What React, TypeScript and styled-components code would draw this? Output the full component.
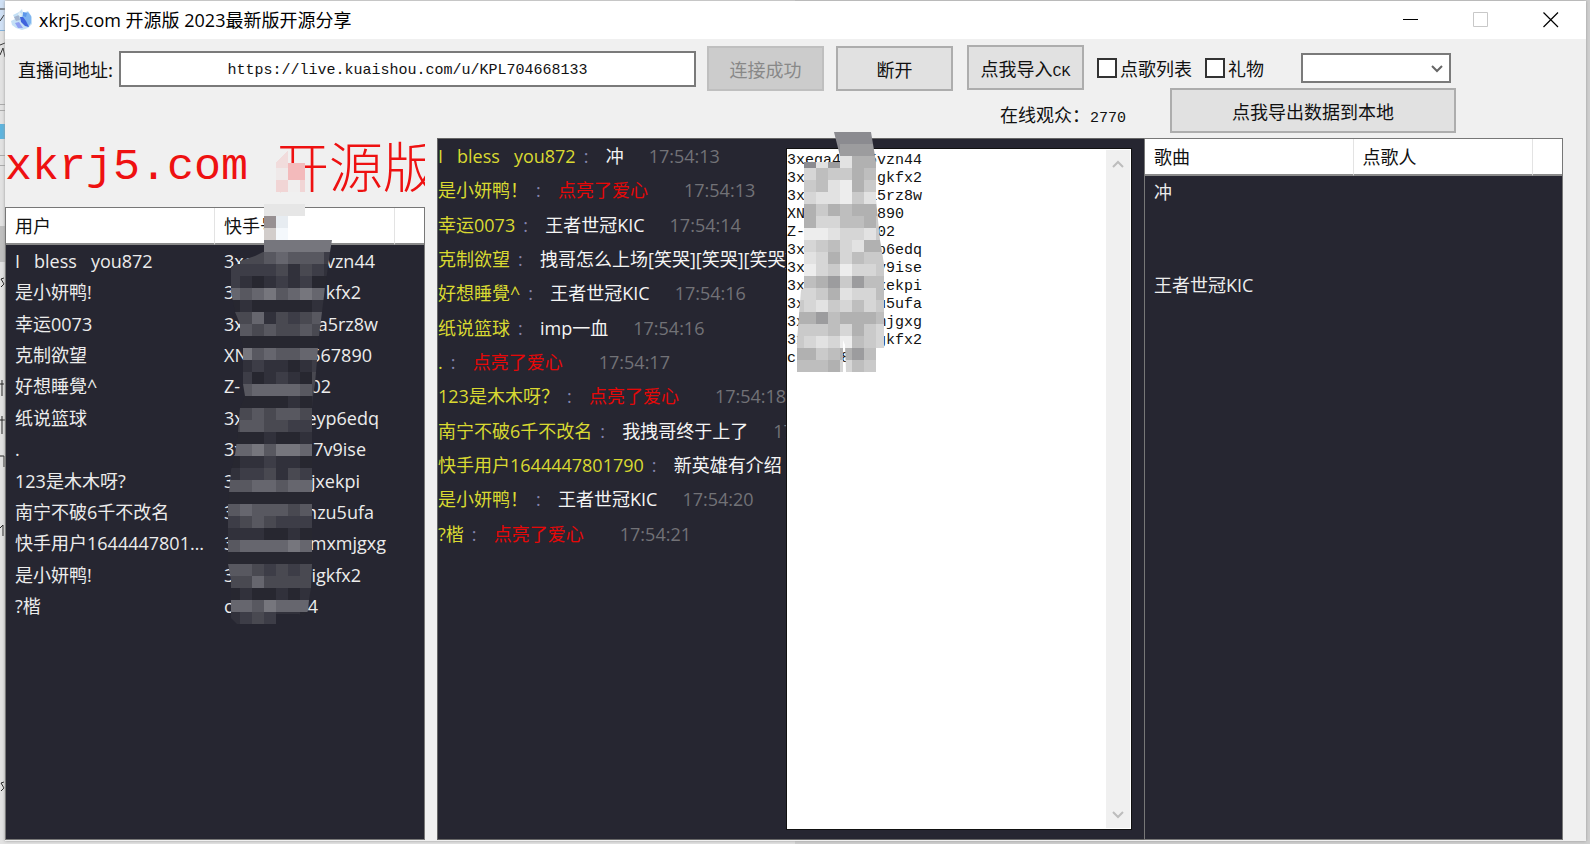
import React from "react";
import styled, { createGlobalStyle } from "styled-components";

const UI_FONT = '"Open Sans", "Noto Sans CJK SC", sans-serif';
const CJK_FONT = '"Noto Sans CJK SC", sans-serif';
const MONO_FONT = '"Liberation Mono", "Noto Sans CJK SC", monospace';

const GlobalStyle = createGlobalStyle`
  *, *::before, *::after { box-sizing: border-box; }
  body { margin: 0; background: #d2d2d2; font-family: ${UI_FONT}; font-size: 18px; color: #111; }
  button, input, select, textarea { font: inherit; color: inherit; margin: 0; border-radius: 0; }
`;

const Desktop = styled.div`
  position: relative;
  display: flex;
  min-height: 100vh;
  padding: 1px 4px 3px 5px;
  background: linear-gradient(to right, #e2e2e2 50%, #cfcfcf 50%);
`;

const DesktopEdge = styled.svg`
  position: absolute;
  left: 0;
  top: 0;
`;

const Window = styled.main`
  flex: 1;
  min-width: 0;
  display: flex;
  flex-direction: column;
  background: #f0f0f0;
  box-shadow: 0 0 3px #999;
  position: relative;
`;

const TitleBar = styled.header`
  display: flex;
  align-items: center;
  height: 38px;
  padding-left: 6px;
  background: #fff;
`;

const Title = styled.h1`
  flex: 1;
  margin: 0 0 0 6px;
  font-size: 18px;
  font-weight: 400;
  line-height: 24px;
  white-space: nowrap;
  color: #000;
`;

const CaptionButton = styled.button`
  display: grid;
  place-items: center;
  width: 70px;
  height: 38px;
  padding: 0;
  border: 0;
  background: none;
`;

const CaptionButtons = styled.div`
  display: flex;
`;

const Toolbar = styled.div`
  display: flex;
  align-items: flex-start;
  height: 49px;
  padding: 6px 135px 0 13px;
  font-family: ${CJK_FONT};
  white-space: nowrap;
`;

const AddressGroup = styled.div`
  flex: 1;
  display: flex;
  align-items: center;
  padding-top: 1px;
`;

const AddressLabel = styled.label`
  flex: none;
  width: 101px;
`;

const AddressInput = styled.input`
  flex: 1;
  min-width: 0;
  height: 36px;
  margin-right: 11px;
  padding: 3px 0 0;
  border: 2px solid #7a7a7a;
  background: #fff;
  font-family: ${MONO_FONT};
  font-size: 15px;
  text-align: center;
`;

const PushButton = styled.button<{ $wide?: boolean }>`
  flex: none;
  width: ${(p) => (p.$wide ? 286 : 117)}px;
  height: 45px;
  padding: 1px 0 0;
  border: 2px solid #adadad;
  background: #e1e1e1;
  line-height: 24px;

  &:disabled {
    border-color: #bfbfbf;
    background: #cccccc;
    color: #888;
  }
`;

const AddressButtons = styled.div`
  display: flex;
  gap: 12px;
`;

const OptionGroup = styled.div`
  display: flex;
  align-items: center;
  gap: 13px;
  margin-left: 14px;
`;

const Narrow = styled.span`
  font-family: ${MONO_FONT};
  font-size: 15px;
  line-height: 15px;
`;

const CheckLabel = styled.label`
  display: flex;
  align-items: center;
  gap: 3px;
`;

const CheckBox = styled.input`
  appearance: none;
  width: 20px;
  height: 20px;
  border: 2px solid #333;
  background: #fff;
`;

const SelectBox = styled.div`
  position: relative;
  width: 150px;
  height: 30px;
  margin-left: 24px;

  svg {
    position: absolute;
    right: 7px;
    top: 11px;
    pointer-events: none;
  }
`;

const Select = styled.select`
  appearance: none;
  display: block;
  width: 100%;
  height: 100%;
  border: 2px solid #7a7a7a;
  background: #fff;
`;

const StatusRow = styled.div`
  display: flex;
  align-items: flex-start;
  justify-content: flex-end;
  gap: 44px;
  height: 50px;
  padding-right: 130px;
  font-family: ${CJK_FONT};
`;

const Audience = styled.output`
  line-height: 52px;
`;

const Panels = styled.div`
  flex: 1;
  display: grid;
  grid-template-columns: 420fr 12px 707fr 419fr;
  padding: 0 23px 1px 0;
`;

const UserColumn = styled.section`
  position: relative;
  display: flex;
  flex-direction: column;
  min-width: 0;
`;

const Banner = styled.h2`
  display: flex;
  align-items: flex-start;
  height: 69px;
  margin: 0;
  overflow: hidden;
  white-space: pre;
  font-family: ${MONO_FONT};
  font-size: 45px;
  font-weight: 400;
  line-height: 60px;
  color: #ee1111;
`;

const BannerHan = styled.span`
  font-family: ${CJK_FONT};
  font-size: 54px;
  font-weight: 300;
  line-height: 54px;
`;

const TableFrame = styled.div`
  flex: 1;
  min-width: 0;
  border: 1px solid #777;
  background: #262631;
`;

const Table = styled.table`
  width: 100%;
  table-layout: fixed;
  border-collapse: separate;
  border-spacing: 0;
  color: #ececec;
`;

const HeadCell = styled.th`
  height: 37px;
  padding: 0 9px;
  border-right: 1px solid #e3e3e3;
  border-bottom: 2px solid #8a8a8a;
  background: #fff;
  color: #111;
  font-weight: 400;
  line-height: 24px;
  text-align: left;

  &:last-child { border-right: 0; }
`;

const Cell = styled.td`
  height: 31px;
  padding: 0 9px;
  line-height: 24px;
  white-space: pre;
  overflow: hidden;
  text-overflow: ellipsis;
`;

const UserTable = styled(Table)`
  height: 414px;
`;

const MaskedId = styled.span<{ $width: number }>`
  display: flex;
  justify-content: space-between;
  width: ${(p) => p.$width}px;
`;

const Mosaic = styled.svg`
  position: absolute;
  left: 0;
  top: 0;
  overflow: visible;
  pointer-events: none;
`;

const ChatColumn = styled.section`
  grid-column: 3;
  display: grid;
  grid-template-columns: 348fr 346fr;
  min-width: 0;
  padding-right: 12px;
  border: 1px solid #666;
  border-right: 0;
  background: #262631;
`;

const ChatList = styled.ul`
  min-width: 0;
  margin: 0;
  padding: 0;
  overflow: hidden;
  list-style: none;
  display: grid;
  grid-auto-rows: 1fr;
  align-content: start;
  height: 412px;
`;

const ChatLine = styled.li`
  display: flex;
  align-items: center;
  white-space: pre;
  line-height: 24px;
`;

const Sender = styled.span`
  color: #d9d931;
`;

const Colon = styled.span`
  width: 30px;
  flex: none;
  padding-left: 8px;
  color: #8484ad;
`;

const Message = styled.span<{ $like?: boolean }>`
  margin-right: ${(p) => (p.$like ? 36 : 25)}px;
  color: ${(p) => (p.$like ? "#e60808" : "#f4f4f4")};
`;

const Time = styled.time`
  color: #727277;
`;

const IdBox = styled.div`
  position: relative;
  display: flex;
  margin: 9px 0;
  border: 1px solid #111;
  background: #fff;
`;

const IdText = styled.textarea`
  flex: 1;
  min-width: 0;
  padding: 3px 0 0;
  border: 0;
  outline: 0;
  resize: none;
  overflow: hidden;
  background: #fff;
  font-family: ${MONO_FONT};
  font-size: 15px;
  line-height: 18px;
  white-space: pre;
`;

const ScrollTrack = styled.div`
  display: flex;
  flex-direction: column;
  justify-content: space-between;
  width: 24px;
  margin: 1px 1px 1px 0;
  background: #f0f0f0;
`;

const ScrollButton = styled.button`
  display: grid;
  place-items: center;
  height: 28px;
  padding: 0;
  border: 0;
  background: none;
`;

type User = { name: string; head: string; tail: string; width: number };

const users: User[] = [
  { name: "I   bless   you872", head: "3xe", tail: "vzn44", width: 151 },
  { name: "是小妍鸭!", head: "3", tail: "kfx2", width: 137 },
  { name: "幸运0073", head: "3x", tail: "a5rz8w", width: 154 },
  { name: "克制欲望", head: "XN", tail: "567890", width: 148 },
  { name: "好想睡覺^", head: "Z-", tail: "02", width: 107 },
  { name: "纸说篮球", head: "3x", tail: "eyp6edq", width: 155 },
  { name: ".", head: "3x", tail: "7v9ise", width: 142 },
  { name: "123是木木呀?", head: "3", tail: "jxekpi", width: 136 },
  { name: "南宁不破6千不改名", head: "3", tail: "nzu5ufa", width: 150 },
  { name: "快手用户1644447801790", head: "3", tail: "mxmjgxg", width: 162 },
  { name: "是小妍鸭!", head: "3", tail: "igkfx2", width: 137 },
  { name: "?楷", head: "c", tail: "4", width: 94 },
];

type Chat = { from: string; text: string; at: string; like?: boolean };

const LIKE = "点亮了爱心";

const chats: Chat[] = [
  { from: "I   bless   you872", text: "冲", at: "17:54:13" },
  { from: "是小妍鸭！", text: LIKE, at: "17:54:13", like: true },
  { from: "幸运0073", text: "王者世冠KIC", at: "17:54:14" },
  { from: "克制欲望", text: "拽哥怎么上场[笑哭][笑哭][笑哭]", at: "17:54:15" },
  { from: "好想睡覺^", text: "王者世冠KIC", at: "17:54:16" },
  { from: "纸说篮球", text: "imp一血", at: "17:54:16" },
  { from: ".", text: LIKE, at: "17:54:17", like: true },
  { from: "123是木木呀？", text: LIKE, at: "17:54:18", like: true },
  { from: "南宁不破6千不改名", text: "我拽哥终于上了", at: "17:54:18" },
  { from: "快手用户1644447801790", text: "新英雄有介绍", at: "17:54:19" },
  { from: "是小妍鸭！", text: "王者世冠KIC", at: "17:54:20" },
  { from: "?楷", text: LIKE, at: "17:54:21", like: true },
];

const ids = [
  "3xega4   5vzn44",
  "3x        gkfx2",
  "3x       a5rz8w",
  "XN       5890",
  "Z-        02",
  "3x       yp6edq",
  "3x       7v9ise",
  "3x       jxekpi",
  "3x       zu5ufa",
  "3x       xmjgxg",
  "3x       igkfx2",
  "cl    8",
].join("\n");

const songs = ["冲", "", "", "王者世冠KIC"];

const DARK: Record<string, string> = {
  a: "#272730", b: "#31313b", c: "#3d3d47", d: "#494951",
  e: "#585860", f: "#66666e", g: "#76767d",
};

const LIGHT: Record<string, string> = {
  a: "#ededed", b: "#e2e2e2", c: "#d6d6d6", d: "#cacaca",
  e: "#bebebe", f: "#b1b1b1", g: "#9c9c9e", h: "#8b8b90",
};

const darkTiles = [
  "   gggggg", " ddefeeec", "ccccdbdcb", "cbabcbcaa", "fefgefgfe",
  "abaaaaabb", "ddfbdcded", "eededdede", "aaaaaaaaa", "fgefeeffe",
  "bbcbbabcc", "ccabcbadd", "deffffedf", "aaaaababa", "ddedeeddd",
  "deeddccdd", "aaabaabaa", "ffgeggffe", "abbcbbacb", "bccdbdccc",
  "eeffeffgg", "aaaaaaaaa", "efeeedeff", "cdedcccdc", "bbbaabacb",
  "effffgfgg", "aaaaaaaaa", "eedcdcdef", "ddfdddddd", "abaababaa",
  "ffegfffee", "bcdcbbaaa",
];

const lightTiles = [
  "hhhhhhhh", "hhhhgggh", "ghbgbffe", "bceddfec", "cdebafdd",
  "dcbbadbc", "ffdfefff", "ffcceefd", "daabccbd", "ccdecbff",
  "bbcfcedd", "bacdaccd", "fefgdgee", "ccdfbcce", "dcbdcecd",
  "ffgefffe", "dddecfdc", "dcbcaedc", "ffdefgef", "eeefcedb",
  "bbbcbbaa",
];

function Tiles(props: { rows: string[]; palette: Record<string, string>; x: number; y: number }) {
  return (
    <>
      {props.rows.map((row, r) =>
        row.split("").map((k, c) =>
          props.palette[k] ? (
            <rect
              key={`${r}-${c}`}
              x={props.x + c * 12}
              y={props.y + r * 12}
              width={12}
              height={12}
              fill={props.palette[k]}
              shapeRendering="crispEdges"
            />
          ) : null,
        ),
      )}
    </>
  );
}

function UserMosaic() {
  return (
    <Mosaic width={420} height={702} viewBox="5 138 420 702" aria-hidden="true">
      <g shapeRendering="crispEdges">
        <path d="M276 163L288 150V168H276Z" fill="#f1dcdc" />
        <rect x={276} y={168} width={12} height={12} fill="#efe9e9" />
        <rect x={288} y={163} width={17} height={17} fill="#f3babb" />
        <rect x={276} y={180} width={12} height={12} fill="#f1d5d5" />
        <rect x={288} y={180} width={12} height={12} fill="#f0eeee" />
        <rect x={300} y={180} width={5} height={12} fill="#f1d5d5" />
        <rect x={264} y={204} width={41} height={12} fill="#e6e6e6" />
        <rect x={264} y={216} width={12} height={12} fill="#979092" />
        <rect x={276} y={216} width={12} height={12} fill="#e7ecf1" />
        <rect x={264} y={228} width={12} height={12} fill="#d2cdcb" />
        <rect x={276} y={228} width={12} height={12} fill="#f4f8fc" />
      </g>
      <clipPath id="user-mask">
        <path d="M264 240H332L330 252L325 288L322 312L319 336L318 348L315 384L313 396L312 408V564L311 588L309 600L308 611L303 617L299 614H276V624H237L231 618V580L228 564V504L231 470L235 455L238 432L240 408L245 396L243 384V348L240 336V324L235 312L231 292V267L240 261L255 256L263 252Z" />
      </clipPath>
      <g clipPath="url(#user-mask)">
        <Tiles rows={darkTiles} palette={DARK} x={228} y={240} />
      </g>
    </Mosaic>
  );
}

function IdMosaic() {
  return (
    <Mosaic width={346} height={682} viewBox="787 149 346 682" aria-hidden="true">
      <clipPath id="id-mask">
        <path d="M834 132H871L873 144L876 162V200L880 240L884 264V348H876V372H846L845 345L843 340V372H797V340L801 290L804 288V162H840V156L837 144Z" />
      </clipPath>
      <g clipPath="url(#id-mask)">
        <Tiles rows={lightTiles} palette={LIGHT} x={792} y={132} />
      </g>
    </Mosaic>
  );
}

function AppIcon() {
  return (
    <svg width={22} height={24} viewBox="0 0 22 24" aria-hidden="true">
      <path d="M2 7L8 4L11 1L12 5L17 3L21 9V16L17 20L11 22L5 20L1 17L0 13L4 11Z" fill="#c4e0f6" />
      <path d="M12 6L17 4L20 8V15L17 19L13 15L11 10Z" fill="#7fb4f0" />
      <path d="M9 9L12 9L15 13L18 19L14 18L10 14Z" fill="#3f63dc" />
      <path d="M12 4L16 5L15 9L12 8Z" fill="#5c97ea" />
      <path d="M4 15L8 14L12 20L7 20Z" fill="#8fa0f2" />
      <path d="M3 9L8 7L9 12L5 13Z" fill="#a3b4cf" />
      <path d="M8 4L11 6L10 9L7 7Z" fill="#e4f0f6" />
    </svg>
  );
}

function Chevron({ up, color }: { up?: boolean; color: string }) {
  return (
    <svg width={14} height={9} viewBox="0 0 14 9" aria-hidden="true">
      <path d={up ? "M2 7L7 2L12 7" : "M2 2L7 7L12 2"} fill="none" stroke={color} strokeWidth={2} />
    </svg>
  );
}

export default function App() {
  return (
    <Desktop lang="zh-CN">
      <GlobalStyle />
      <DesktopEdge width={5} height={844} viewBox="0 0 5 844" aria-hidden="true">
        <rect width={5} height={31} fill="#cfe0f5" />
        <rect y={30} width={5} height={1} fill="#7fb0dc" />
        <path d="M0 9H5M0 21L4 15M0 45L5 43M0 55L3 48L5 57" stroke="#333" fill="none" />
        <rect y={124} width={5} height={15} fill="#5db4de" />
        <path d="M0 104.500H5M0 110.500H5M0 155.500H5M0 165.500H5" stroke="#aaa" />
        <rect y={226} width={5} height={36} fill="#bfbfbf" />
        <path d="M4 278L1 279L4 284L1 287M4 782L1 783L4 788L1 791M0 384H4M2 380V396M0 420H5M2 416V434M0 456H4V467M0 528L3 525V536" stroke="#222" fill="none" strokeWidth={1} />
      </DesktopEdge>
      <Window>
        <TitleBar>
          <AppIcon />
          <Title>xkrj5.com 开源版 2023最新版开源分享</Title>
          <CaptionButtons>
            <CaptionButton aria-label="最小化">
              <svg width={16} height={16} viewBox="0 0 16 16"><path d="M0 7.500H15" stroke="#000" /></svg>
            </CaptionButton>
            <CaptionButton aria-label="最大化" disabled>
              <svg width={16} height={16} viewBox="0 0 16 16"><path d="M.5.500H14.500V14.500H.5Z" fill="none" stroke="#c8c8c8" /></svg>
            </CaptionButton>
            <CaptionButton aria-label="关闭">
              <svg width={16} height={16} viewBox="0 0 16 16"><path d="M.5.500L15 15M15 .500L.5 15" stroke="#000" strokeWidth={1.2} /></svg>
            </CaptionButton>
          </CaptionButtons>
        </TitleBar>

        <Toolbar>
          <AddressGroup>
            <AddressLabel htmlFor="room">直播间地址:</AddressLabel>
            <AddressInput id="room" defaultValue="https://live.kuaishou.com/u/KPL704668133" />
            <AddressButtons>
              <PushButton disabled>连接成功</PushButton>
              <PushButton>断开</PushButton>
            </AddressButtons>
          </AddressGroup>
          <OptionGroup>
            <PushButton>点我导入<Narrow>CK</Narrow></PushButton>
            <CheckLabel><CheckBox type="checkbox" />点歌列表</CheckLabel>
            <CheckLabel><CheckBox type="checkbox" />礼物</CheckLabel>
            <SelectBox>
              <Select aria-label="选项" defaultValue=""><option value="" /></Select>
              <Chevron color="#666" />
            </SelectBox>
          </OptionGroup>
        </Toolbar>
        <StatusRow>
          <Audience>在线观众：<Narrow>2770</Narrow></Audience>
          <PushButton $wide>点我导出数据到本地</PushButton>
        </StatusRow>

        <Panels>
          <UserColumn>
            <Banner><span>xkrj5.com </span><BannerHan>开源版</BannerHan></Banner>
            <TableFrame>
              <UserTable>
                <colgroup><col width="50%" /><col width="43%" /><col /></colgroup>
                <thead>
                  <tr><HeadCell>用户</HeadCell><HeadCell>快手号</HeadCell><HeadCell /></tr>
                </thead>
                <tbody>
                  {users.map((u, i) => (
                    <tr key={i}>
                      <Cell>{u.name}</Cell>
                      <Cell><MaskedId $width={u.width}><span>{u.head}</span><span>{u.tail}</span></MaskedId></Cell>
                      <Cell />
                    </tr>
                  ))}
                </tbody>
              </UserTable>
            </TableFrame>
            <UserMosaic />
          </UserColumn>

          <ChatColumn>
            <ChatList>
              {chats.map((c, i) => (
                <ChatLine key={i}>
                  <Sender>{c.from}</Sender>
                  <Colon>:</Colon>
                  <Message $like={c.like}>{c.text}</Message>
                  <Time>{c.at}</Time>
                </ChatLine>
              ))}
            </ChatList>
            <IdBox>
              <IdText aria-label="快手号" defaultValue={ids} spellCheck={false} />
              <ScrollTrack>
                <ScrollButton aria-label="向上"><Chevron up color="#bdbdbd" /></ScrollButton>
                <ScrollButton aria-label="向下"><Chevron color="#bdbdbd" /></ScrollButton>
              </ScrollTrack>
              <IdMosaic />
            </IdBox>
          </ChatColumn>

          <TableFrame>
            <Table>
              <colgroup><col width="50%" /><col width="43%" /><col /></colgroup>
              <thead>
                <tr><HeadCell>歌曲</HeadCell><HeadCell>点歌人</HeadCell><HeadCell /></tr>
              </thead>
              <tbody>
                {songs.map((s, i) => (
                  <tr key={i}><Cell>{s}</Cell><Cell /><Cell /></tr>
                ))}
              </tbody>
            </Table>
          </TableFrame>
        </Panels>
      </Window>
    </Desktop>
  );
}
